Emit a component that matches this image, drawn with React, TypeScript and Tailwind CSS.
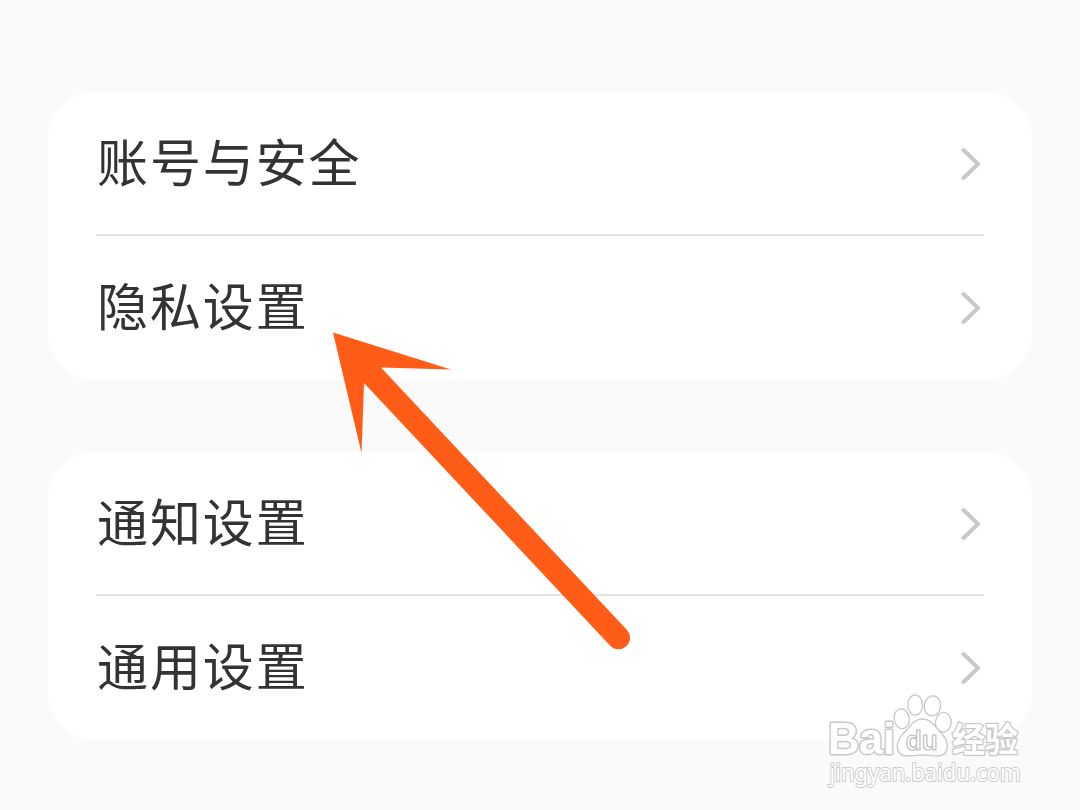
const GROUPS = [
  ["账号与安全", "隐私设置"],
  ["通知设置", "通用设置"],
];

export default function App() {
  return (
    <main className="relative h-[810px] w-[1080px] overflow-hidden bg-[#fafafa] px-12 pt-[92px]">
      <div className="flex flex-col gap-[72px]">
        {GROUPS.map((items) => (
          <SettingsGroup key={items[0]} items={items} />
        ))}
      </div>
      <PointerArrow />
      <Watermark />
    </main>
  );
}

function SettingsGroup({ items }: { items: string[] }) {
  return (
    <ul className="h-72 rounded-[48px] bg-white px-12">
      {items.map((label, i) => (
        <li key={label} className={i > 0 ? "h-[146px] border-t-2 border-[#e3e3e3]" : "h-[142px]"}>
          <button className="flex h-[142px] w-full items-center justify-between pr-0.5 pl-px text-left">
            <span className="pb-1.5 font-['Noto_Sans_CJK_SC',sans-serif] text-[51px] leading-[72px] tracking-[1.9px] text-[#333]">{label}</span>
            <Chevron />
          </button>
        </li>
      ))}
    </ul>
  );
}

function Chevron() {
  return (
    <svg className="mt-0.5 h-9 w-6" viewBox="0 0 24 36" fill="none">
      <path d="M5.500 4 20 18 5.500 32" stroke="#c8c8c8" strokeWidth="4" strokeLinecap="round" strokeLinejoin="round" />
    </svg>
  );
}

function PointerArrow() {
  return (
    <svg className="absolute top-[320px] left-[320px] h-[340px] w-[330px]" viewBox="320 320 330 340">
      <path d="M333 332.500 451 369.500 381 367.500 627 630A11.400 11.400 0 0 1 610 645.500L364 383 361.500 453Z" fill="#ff5d17" />
    </svg>
  );
}

function Watermark() {
  return (
    <svg className="absolute top-[680px] left-[810px] h-[120px] w-[230px]" viewBox="0 0 230 120">
      <g fill="#fff" stroke="#c8c8c8" strokeWidth="1.300" strokeLinejoin="round">
        <text x="18" y="74" fontFamily="'Liberation Sans', sans-serif" fontWeight="700" fontSize="44" textLength="67" lengthAdjust="spacingAndGlyphs" strokeWidth="3" paintOrder="stroke">Bai</text>
        <ellipse cx="91.700" cy="38.700" rx="7.500" ry="10" transform="rotate(-8 91.700 38.700)" />
        <ellipse cx="105.200" cy="25" rx="7.400" ry="10.200" />
        <ellipse cx="122.400" cy="25.900" rx="8.200" ry="10" transform="rotate(8 122.400 25.900)" />
        <ellipse cx="133.300" cy="42.300" rx="7.900" ry="9.900" transform="rotate(6 133.300 42.300)" />
        <path d="M112.500 39C105 39 101.500 44.500 97 49.500C91.500 55 87.300 59.500 87.300 66C87.300 73 92 76 98 76C104 76 107.500 75 112.500 75C117.500 75 121 76 127 76C133 76 137.300 73 137.300 66C137.300 59.500 133.500 55 128 49.500C123.500 44.500 120 39 112.500 39Z" />
        <text x="95.500" y="69.500" fontFamily="'Inter', sans-serif" fontWeight="600" fontSize="27" textLength="32" lengthAdjust="spacingAndGlyphs" stroke="#bdbdbd" strokeWidth="1.200">du</text>
        <text x="142" y="72" fontFamily="'Noto Sans CJK SC', sans-serif" fontWeight="700" fontSize="34" textLength="66" lengthAdjust="spacingAndGlyphs" strokeWidth="2.600" paintOrder="stroke">经验</text>
        <text x="19.500" y="101" fontFamily="'Noto Sans', sans-serif" fontSize="23" textLength="191" lengthAdjust="spacingAndGlyphs" stroke="#cccccc" strokeWidth="2" paintOrder="stroke">jingyan.baidu.com</text>
      </g>
    </svg>
  );
}
